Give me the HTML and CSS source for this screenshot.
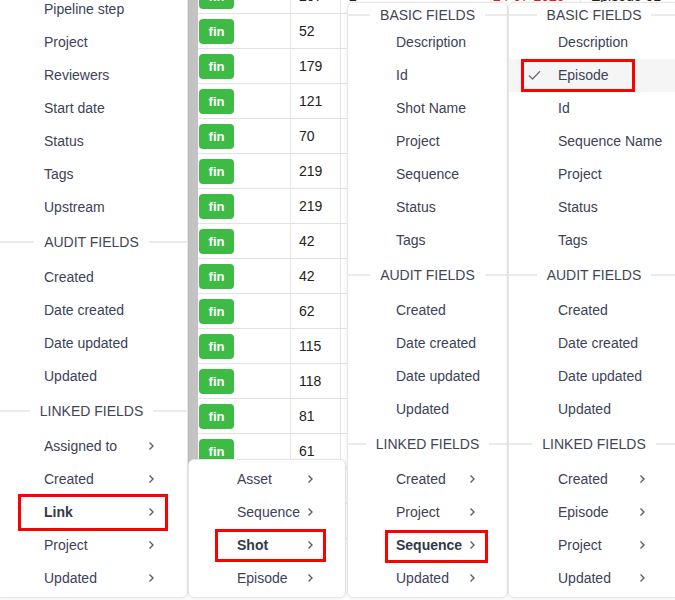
FILE: index.html
```html
<!DOCTYPE html>
<html>
<head>
<meta charset="utf-8">
<link rel="stylesheet" href="styles.css">
</head>
<body>
<div class="app">
  <div class="workspace">
    <div class="left-gap"></div>
    <div class="scrollbar"></div>
    <div class="grid">
      <div class="row"><div class="c c-status"><span class="badge">fin</span></div><div class="c c-num">207</div><div class="c c-a">2</div><div class="c c-date">24-07-2025</div><div class="c c-b">Episode 01 ▪▪</div></div>
      <div class="row"><div class="c c-status"><span class="badge">fin</span></div><div class="c c-num">52</div><div class="c c-a"></div><div class="c c-date"></div><div class="c c-b"></div></div>
      <div class="row"><div class="c c-status"><span class="badge">fin</span></div><div class="c c-num">179</div><div class="c c-a"></div><div class="c c-date"></div><div class="c c-b"></div></div>
      <div class="row"><div class="c c-status"><span class="badge">fin</span></div><div class="c c-num">121</div><div class="c c-a"></div><div class="c c-date"></div><div class="c c-b"></div></div>
      <div class="row"><div class="c c-status"><span class="badge">fin</span></div><div class="c c-num">70</div><div class="c c-a"></div><div class="c c-date"></div><div class="c c-b"></div></div>
      <div class="row"><div class="c c-status"><span class="badge">fin</span></div><div class="c c-num">219</div><div class="c c-a"></div><div class="c c-date"></div><div class="c c-b"></div></div>
      <div class="row"><div class="c c-status"><span class="badge">fin</span></div><div class="c c-num">219</div><div class="c c-a"></div><div class="c c-date"></div><div class="c c-b"></div></div>
      <div class="row"><div class="c c-status"><span class="badge">fin</span></div><div class="c c-num">42</div><div class="c c-a"></div><div class="c c-date"></div><div class="c c-b"></div></div>
      <div class="row"><div class="c c-status"><span class="badge">fin</span></div><div class="c c-num">42</div><div class="c c-a"></div><div class="c c-date"></div><div class="c c-b"></div></div>
      <div class="row"><div class="c c-status"><span class="badge">fin</span></div><div class="c c-num">62</div><div class="c c-a"></div><div class="c c-date"></div><div class="c c-b"></div></div>
      <div class="row"><div class="c c-status"><span class="badge">fin</span></div><div class="c c-num">115</div><div class="c c-a"></div><div class="c c-date"></div><div class="c c-b"></div></div>
      <div class="row"><div class="c c-status"><span class="badge">fin</span></div><div class="c c-num">118</div><div class="c c-a"></div><div class="c c-date"></div><div class="c c-b"></div></div>
      <div class="row"><div class="c c-status"><span class="badge">fin</span></div><div class="c c-num">81</div><div class="c c-a"></div><div class="c c-date"></div><div class="c c-b"></div></div>
      <div class="row"><div class="c c-status"><span class="badge">fin</span></div><div class="c c-num">61</div><div class="c c-a"></div><div class="c c-date"></div><div class="c c-b"></div></div>
      <div class="row"><div class="c c-status"><span class="badge">fin</span></div><div class="c c-num">64</div><div class="c c-a"></div><div class="c c-date"></div><div class="c c-b"></div></div>
      <div class="row"><div class="c c-status"><span class="badge">fin</span></div><div class="c c-num">73</div><div class="c c-a"></div><div class="c c-date"></div><div class="c c-b"></div></div>
    </div>
  </div>

  <div class="menu m1">
    <div class="item">Pipeline step</div>
    <div class="item">Project</div>
    <div class="item">Reviewers</div>
    <div class="item">Start date</div>
    <div class="item">Status</div>
    <div class="item">Tags</div>
    <div class="item">Upstream</div>
    <div class="hdr"><span>AUDIT FIELDS</span></div>
    <div class="item">Created</div>
    <div class="item">Date created</div>
    <div class="item">Date updated</div>
    <div class="item">Updated</div>
    <div class="hdr"><span>LINKED FIELDS</span></div>
    <div class="item"><span>Assigned to</span><svg class="chev" viewBox="0 0 7 10"><path d="M1.5 1.5L5 5L1.5 8.5"/></svg></div>
    <div class="item"><span>Created</span><svg class="chev" viewBox="0 0 7 10"><path d="M1.5 1.5L5 5L1.5 8.5"/></svg></div>
    <div class="item b"><span>Link</span><svg class="chev" viewBox="0 0 7 10"><path d="M1.5 1.5L5 5L1.5 8.5"/></svg></div>
    <div class="item"><span>Project</span><svg class="chev" viewBox="0 0 7 10"><path d="M1.5 1.5L5 5L1.5 8.5"/></svg></div>
    <div class="item"><span>Updated</span><svg class="chev" viewBox="0 0 7 10"><path d="M1.5 1.5L5 5L1.5 8.5"/></svg></div>
  </div>

  <div class="menu m4">
    <div class="item"><span>Asset</span><svg class="chev" viewBox="0 0 7 10"><path d="M1.5 1.5L5 5L1.5 8.5"/></svg></div>
    <div class="item"><span>Sequence</span><svg class="chev" viewBox="0 0 7 10"><path d="M1.5 1.5L5 5L1.5 8.5"/></svg></div>
    <div class="item b"><span>Shot</span><svg class="chev" viewBox="0 0 7 10"><path d="M1.5 1.5L5 5L1.5 8.5"/></svg></div>
    <div class="item"><span>Episode</span><svg class="chev" viewBox="0 0 7 10"><path d="M1.5 1.5L5 5L1.5 8.5"/></svg></div>
  </div>

  <div class="menu m2">
    <div class="hdr first"><span>BASIC FIELDS</span></div>
    <div class="item">Description</div>
    <div class="item">Id</div>
    <div class="item">Shot Name</div>
    <div class="item">Project</div>
    <div class="item">Sequence</div>
    <div class="item">Status</div>
    <div class="item">Tags</div>
    <div class="hdr"><span>AUDIT FIELDS</span></div>
    <div class="item">Created</div>
    <div class="item">Date created</div>
    <div class="item">Date updated</div>
    <div class="item">Updated</div>
    <div class="hdr"><span>LINKED FIELDS</span></div>
    <div class="item"><span>Created</span><svg class="chev" viewBox="0 0 7 10"><path d="M1.5 1.5L5 5L1.5 8.5"/></svg></div>
    <div class="item"><span>Project</span><svg class="chev" viewBox="0 0 7 10"><path d="M1.5 1.5L5 5L1.5 8.5"/></svg></div>
    <div class="item b"><span>Sequence</span><svg class="chev" viewBox="0 0 7 10"><path d="M1.5 1.5L5 5L1.5 8.5"/></svg></div>
    <div class="item"><span>Updated</span><svg class="chev" viewBox="0 0 7 10"><path d="M1.5 1.5L5 5L1.5 8.5"/></svg></div>
  </div>

  <div class="menu m3">
    <div class="hdr first"><span>BASIC FIELDS</span></div>
    <div class="item">Description</div>
    <div class="item sel"><svg class="check" viewBox="0 0 13 10"><path d="M1 5.5L4.5 9L12 1.2"/></svg><span>Episode</span></div>
    <div class="item">Id</div>
    <div class="item">Sequence Name</div>
    <div class="item">Project</div>
    <div class="item">Status</div>
    <div class="item">Tags</div>
    <div class="hdr"><span>AUDIT FIELDS</span></div>
    <div class="item">Created</div>
    <div class="item">Date created</div>
    <div class="item">Date updated</div>
    <div class="item">Updated</div>
    <div class="hdr"><span>LINKED FIELDS</span></div>
    <div class="item"><span>Created</span><svg class="chev" viewBox="0 0 7 10"><path d="M1.5 1.5L5 5L1.5 8.5"/></svg></div>
    <div class="item"><span>Episode</span><svg class="chev" viewBox="0 0 7 10"><path d="M1.5 1.5L5 5L1.5 8.5"/></svg></div>
    <div class="item"><span>Project</span><svg class="chev" viewBox="0 0 7 10"><path d="M1.5 1.5L5 5L1.5 8.5"/></svg></div>
    <div class="item"><span>Updated</span><svg class="chev" viewBox="0 0 7 10"><path d="M1.5 1.5L5 5L1.5 8.5"/></svg></div>
  </div>

  <div class="mark mark-link"></div>
  <div class="mark mark-shot"></div>
  <div class="mark mark-seq"></div>
  <div class="mark mark-ep"></div>
</div>
</body>
</html>
```

FILE: styles.css
```css
* { box-sizing: border-box; }

body {
  margin: 0;
  font-family: "Liberation Sans", Arial, sans-serif;
  font-size: 14px;
  color: #3c4257;
  background: #fff;
}

.app {
  position: relative;
  width: 675px;
  height: 600px;
  overflow: hidden;
}

/* background data grid */
.workspace {
  display: flex;
  margin-top: -21px;
}
.left-gap { width: 188px; flex: none; }
.scrollbar { width: 10px; flex: none; background: #c3c3c3; }
.grid { flex: 1; }

.row {
  display: grid;
  grid-template-columns: 93px 50px 150px 90px 1fr;
  height: 35px;
  border-bottom: 1px solid #e2e2e2;
}
.c {
  display: flex;
  align-items: center;
  border-right: 1px solid #e6e6e6;
  color: #222;
  white-space: nowrap;
  overflow: hidden;
}
.c-status { padding-left: 1px; }
.c-num { padding-left: 8px; }
.c-a { padding-left: 8px; }
.c-date { padding-left: 2px; color: #e02020; }
.c-b { padding-left: 10px; border-right: 0; }

.badge {
  width: 35px;
  height: 25px;
  border-radius: 4px;
  background: #3dbb45;
  color: #fff;
  font-weight: bold;
  font-size: 13px;
  display: flex;
  align-items: center;
  justify-content: center;
}

/* dropdown menus */
.menu {
  position: absolute;
  background: #fff;
  border: 1px solid #e6e6e6;
  border-radius: 6px;
  box-shadow: 0 1px 5px rgba(0, 0, 0, 0.07);
  padding-bottom: 2px;
}
.m1 { left: -5px; top: -8px; width: 193px; }
.m2 { left: 347px; top: 2px; width: 161px; }
.m3 { left: 508px; top: 2px; width: 172px; }
.m4 { left: 188px; top: 459px; width: 158px; padding-top: 3px; }

.hdr {
  display: flex;
  align-items: center;
  gap: 10px;
  height: 37px;
  padding-bottom: 2px;
  color: #404656;
  white-space: nowrap;
}
.hdr::before,
.hdr::after {
  content: "";
  flex: 1;
  height: 2px;
  background: #ebebeb;
}
.hdr.first { height: 23px; padding-top: 1px; padding-bottom: 0; }

.item {
  display: flex;
  align-items: center;
  justify-content: space-between;
  height: 33px;
  padding: 0 31px 2px 48px;
  white-space: nowrap;
}
.m1 .item { padding-left: 48px; padding-right: 32px; }
.m3 .item { padding-left: 49px; padding-right: 33px; }
.item.b { font-weight: bold; color: #333947; }
.m3 .item.sel {
  background: #f5f5f5;
  justify-content: flex-start;
  gap: 17px;
  padding-left: 19px;
}

.chev {
  width: 7px;
  height: 10px;
  flex: none;
  margin-left: 6px;
  fill: none;
  stroke: #5a5f6b;
  stroke-width: 1.4;
}
.check {
  width: 13px;
  height: 10px;
  flex: none;
  fill: none;
  stroke: #6b6f78;
  stroke-width: 1.3;
}

/* red annotation boxes */
.mark {
  position: absolute;
  border: 3px solid #ff0000;
}
.mark-link { left: 18px; top: 494px; width: 150px; height: 37px; }
.mark-shot { left: 215px; top: 529px; width: 111px; height: 33px; }
.mark-seq { left: 385px; top: 530px; width: 103px; height: 33px; }
.mark-ep { left: 521px; top: 59px; width: 114px; height: 33px; }
```
